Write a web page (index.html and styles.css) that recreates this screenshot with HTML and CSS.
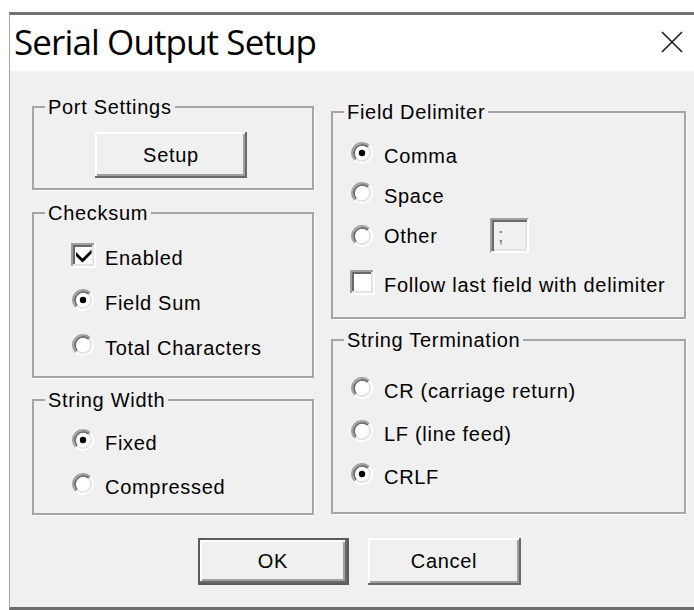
FILE: index.html
```html
<!DOCTYPE html>
<html lang="en">
<head>
<meta charset="utf-8">
<title>Serial Output Setup</title>
<link rel="stylesheet" href="styles.css">
</head>
<body>
<div class="window">
  <header class="titlebar">
    <h1 class="title">Serial Output Setup</h1>
    <span class="close" aria-label="Close">
      <svg viewBox="0 0 22 22" width="22" height="22"><path d="M1 1 L21 21 M21 1 L1 21" stroke="#1c1c1c" stroke-width="1.6" fill="none"/></svg>
    </span>
  </header>

  <main class="content">
    <div class="columns">
      <div class="col col-left">
        <fieldset class="group">
          <legend>Port Settings</legend>
          <div class="group-body body-port">
            <button class="btn btn-setup" type="button">Setup</button>
          </div>
        </fieldset>

        <fieldset class="group group-checksum">
          <legend>Checksum</legend>
          <div class="group-body body-checksum">
            <label class="option">
              <span class="slot">
                <svg class="check" viewBox="0 0 25 25"><rect width="25" height="25" fill="#fff"/><rect width="23" height="23" fill="#a0a0a0"/><rect x="2" y="2" width="21" height="21" fill="#e3e3e3"/><rect x="2" y="2" width="19" height="19" fill="#696969"/><rect x="4" y="4" width="17" height="17" fill="#fff"/><polygon points="5,9 11.5,15.5 20.5,6.5 20.5,10.5 11.5,19.5 5,13" fill="#000"/></svg>
              </span>
              <span>Enabled</span>
            </label>
            <label class="option">
              <span class="slot">
                <svg class="radio" viewBox="0 0 24 24"><circle cx="12" cy="12" r="9" fill="#fff"/><path d="M4.22 19.78A11 11 0 0 1 19.78 4.22" stroke="#a0a0a0" stroke-width="2" fill="none"/><path d="M5.64 18.36A9 9 0 0 1 18.36 5.64" stroke="#696969" stroke-width="2" fill="none"/><path d="M19.78 4.22A11 11 0 0 1 4.22 19.78" stroke="#fff" stroke-width="2" fill="none"/><path d="M18.36 5.64A9 9 0 0 1 5.64 18.36" stroke="#e3e3e3" stroke-width="2" fill="none"/><circle cx="12" cy="12" r="3.5" fill="#000"/></svg>
              </span>
              <span>Field Sum</span>
            </label>
            <label class="option">
              <span class="slot">
                <svg class="radio" viewBox="0 0 24 24"><circle cx="12" cy="12" r="9" fill="#fff"/><path d="M4.22 19.78A11 11 0 0 1 19.78 4.22" stroke="#a0a0a0" stroke-width="2" fill="none"/><path d="M5.64 18.36A9 9 0 0 1 18.36 5.64" stroke="#696969" stroke-width="2" fill="none"/><path d="M19.78 4.22A11 11 0 0 1 4.22 19.78" stroke="#fff" stroke-width="2" fill="none"/><path d="M18.36 5.64A9 9 0 0 1 5.64 18.36" stroke="#e3e3e3" stroke-width="2" fill="none"/></svg>
              </span>
              <span>Total Characters</span>
            </label>
          </div>
        </fieldset>

        <fieldset class="group group-width">
          <legend>String Width</legend>
          <div class="group-body body-width">
            <label class="option">
              <span class="slot">
                <svg class="radio" viewBox="0 0 24 24"><circle cx="12" cy="12" r="9" fill="#fff"/><path d="M4.22 19.78A11 11 0 0 1 19.78 4.22" stroke="#a0a0a0" stroke-width="2" fill="none"/><path d="M5.64 18.36A9 9 0 0 1 18.36 5.64" stroke="#696969" stroke-width="2" fill="none"/><path d="M19.78 4.22A11 11 0 0 1 4.22 19.78" stroke="#fff" stroke-width="2" fill="none"/><path d="M18.36 5.64A9 9 0 0 1 5.64 18.36" stroke="#e3e3e3" stroke-width="2" fill="none"/><circle cx="12" cy="12" r="3.5" fill="#000"/></svg>
              </span>
              <span>Fixed</span>
            </label>
            <label class="option">
              <span class="slot">
                <svg class="radio" viewBox="0 0 24 24"><circle cx="12" cy="12" r="9" fill="#fff"/><path d="M4.22 19.78A11 11 0 0 1 19.78 4.22" stroke="#a0a0a0" stroke-width="2" fill="none"/><path d="M5.64 18.36A9 9 0 0 1 18.36 5.64" stroke="#696969" stroke-width="2" fill="none"/><path d="M19.78 4.22A11 11 0 0 1 4.22 19.78" stroke="#fff" stroke-width="2" fill="none"/><path d="M18.36 5.64A9 9 0 0 1 5.64 18.36" stroke="#e3e3e3" stroke-width="2" fill="none"/></svg>
              </span>
              <span>Compressed</span>
            </label>
          </div>
        </fieldset>
      </div>

      <div class="col col-right">
        <fieldset class="group">
          <legend>Field Delimiter</legend>
          <div class="group-body body-delim">
            <label class="option">
              <span class="slot">
                <svg class="radio" viewBox="0 0 24 24"><circle cx="12" cy="12" r="9" fill="#fff"/><path d="M4.22 19.78A11 11 0 0 1 19.78 4.22" stroke="#a0a0a0" stroke-width="2" fill="none"/><path d="M5.64 18.36A9 9 0 0 1 18.36 5.64" stroke="#696969" stroke-width="2" fill="none"/><path d="M19.78 4.22A11 11 0 0 1 4.22 19.78" stroke="#fff" stroke-width="2" fill="none"/><path d="M18.36 5.64A9 9 0 0 1 5.64 18.36" stroke="#e3e3e3" stroke-width="2" fill="none"/><circle cx="12" cy="12" r="3.5" fill="#000"/></svg>
              </span>
              <span>Comma</span>
            </label>
            <label class="option opt-space">
              <span class="slot">
                <svg class="radio" viewBox="0 0 24 24"><circle cx="12" cy="12" r="9" fill="#fff"/><path d="M4.22 19.78A11 11 0 0 1 19.78 4.22" stroke="#a0a0a0" stroke-width="2" fill="none"/><path d="M5.64 18.36A9 9 0 0 1 18.36 5.64" stroke="#696969" stroke-width="2" fill="none"/><path d="M19.78 4.22A11 11 0 0 1 4.22 19.78" stroke="#fff" stroke-width="2" fill="none"/><path d="M18.36 5.64A9 9 0 0 1 5.64 18.36" stroke="#e3e3e3" stroke-width="2" fill="none"/></svg>
              </span>
              <span>Space</span>
            </label>
            <div class="option opt-other">
              <span class="slot">
                <svg class="radio" viewBox="0 0 24 24"><circle cx="12" cy="12" r="9" fill="#fff"/><path d="M4.22 19.78A11 11 0 0 1 19.78 4.22" stroke="#a0a0a0" stroke-width="2" fill="none"/><path d="M5.64 18.36A9 9 0 0 1 18.36 5.64" stroke="#696969" stroke-width="2" fill="none"/><path d="M19.78 4.22A11 11 0 0 1 4.22 19.78" stroke="#fff" stroke-width="2" fill="none"/><path d="M18.36 5.64A9 9 0 0 1 5.64 18.36" stroke="#e3e3e3" stroke-width="2" fill="none"/></svg>
              </span>
              <span class="other-label">Other</span>
              <input class="field" type="text" value=";" disabled>
            </div>
            <label class="option opt-follow">
              <span class="slot">
                <svg class="check" viewBox="0 0 25 25"><rect width="25" height="25" fill="#fff"/><rect width="23" height="23" fill="#a0a0a0"/><rect x="2" y="2" width="21" height="21" fill="#e3e3e3"/><rect x="2" y="2" width="19" height="19" fill="#696969"/><rect x="4" y="4" width="17" height="17" fill="#fff"/></svg>
              </span>
              <span>Follow last field with delimiter</span>
            </label>
          </div>
        </fieldset>

        <fieldset class="group group-term">
          <legend>String Termination</legend>
          <div class="group-body body-term">
            <label class="option">
              <span class="slot">
                <svg class="radio" viewBox="0 0 24 24"><circle cx="12" cy="12" r="9" fill="#fff"/><path d="M4.22 19.78A11 11 0 0 1 19.78 4.22" stroke="#a0a0a0" stroke-width="2" fill="none"/><path d="M5.64 18.36A9 9 0 0 1 18.36 5.64" stroke="#696969" stroke-width="2" fill="none"/><path d="M19.78 4.22A11 11 0 0 1 4.22 19.78" stroke="#fff" stroke-width="2" fill="none"/><path d="M18.36 5.64A9 9 0 0 1 5.64 18.36" stroke="#e3e3e3" stroke-width="2" fill="none"/></svg>
              </span>
              <span>CR (carriage return)</span>
            </label>
            <label class="option">
              <span class="slot">
                <svg class="radio" viewBox="0 0 24 24"><circle cx="12" cy="12" r="9" fill="#fff"/><path d="M4.22 19.78A11 11 0 0 1 19.78 4.22" stroke="#a0a0a0" stroke-width="2" fill="none"/><path d="M5.64 18.36A9 9 0 0 1 18.36 5.64" stroke="#696969" stroke-width="2" fill="none"/><path d="M19.78 4.22A11 11 0 0 1 4.22 19.78" stroke="#fff" stroke-width="2" fill="none"/><path d="M18.36 5.64A9 9 0 0 1 5.64 18.36" stroke="#e3e3e3" stroke-width="2" fill="none"/></svg>
              </span>
              <span>LF (line feed)</span>
            </label>
            <label class="option">
              <span class="slot">
                <svg class="radio" viewBox="0 0 24 24"><circle cx="12" cy="12" r="9" fill="#fff"/><path d="M4.22 19.78A11 11 0 0 1 19.78 4.22" stroke="#a0a0a0" stroke-width="2" fill="none"/><path d="M5.64 18.36A9 9 0 0 1 18.36 5.64" stroke="#696969" stroke-width="2" fill="none"/><path d="M19.78 4.22A11 11 0 0 1 4.22 19.78" stroke="#fff" stroke-width="2" fill="none"/><path d="M18.36 5.64A9 9 0 0 1 5.64 18.36" stroke="#e3e3e3" stroke-width="2" fill="none"/><circle cx="12" cy="12" r="3.5" fill="#000"/></svg>
              </span>
              <span>CRLF</span>
            </label>
          </div>
        </fieldset>
      </div>
    </div>

    <div class="actions">
      <button class="btn btn-ok btn-default" type="button">OK</button>
      <button class="btn btn-cancel" type="button">Cancel</button>
    </div>
  </main>
</div>
</body>
</html>
```

FILE: styles.css
```css
* { box-sizing: border-box; }

html, body { margin: 0; }

body {
  height: 610px;
  overflow: hidden;
  padding: 12px 0 0 9px;
  background: #fff;
  color: #000;
  font-family: "Liberation Sans", Arial, sans-serif;
  font-size: 20px;
  letter-spacing: 0.7px;
}

/* dialog frame: dark top/bottom edges, thin light left edge */
.window {
  height: 598px;
  display: flex;
  flex-direction: column;
  background: #f0f0f0;
  border-top: 3px solid #747474;
  border-bottom: 3px solid #6c6c6c;
  border-left: 1px solid #a6a6a6;
}

.titlebar {
  flex: none;
  height: 56px;
  display: flex;
  align-items: flex-start;
  justify-content: space-between;
  padding: 7px 11px 0 4px;
  background: #fff;
}

.title {
  margin: 0;
  font-family: "Open Sans", "Noto Sans", sans-serif;
  font-weight: 400;
  font-size: 35px;
  line-height: 40px;
  letter-spacing: -0.9px;
}

.close {
  height: 40px;
  display: flex;
  align-items: center;
}

.content {
  padding-left: 22px;
}

.columns {
  display: flex;
  align-items: flex-start;
  gap: 17px;
}

.col {
  display: flex;
  flex-direction: column;
}

.col-left { width: 282px; padding-top: 26px; }
.col-right { width: 355px; padding-top: 31px; }

/* etched group box */
.group {
  margin: 0;
  padding: 0;
  min-width: 0;
  border: 2px solid #a5a5a5;
  box-shadow: 1px 1px 0 #fff;
}

.group legend {
  margin-left: 11px;
  padding: 0 3px;
  line-height: 20px;
}

.group-checksum { margin-top: 13px; }
.group-width { margin-top: 12px; }
.group-term { margin-top: 11px; }

.group-body {
  display: flex;
  flex-direction: column;
}

.body-port { padding: 15px 0 10px 61px; }
.body-checksum { padding: 23px 0 16px 36px; gap: 21px; }
.body-width { padding: 21px 0 14px 36px; gap: 20px; }
.body-delim { padding: 22px 0 20px 16px; }
.body-term { padding: 29px 0 23px 16px; gap: 19px; }

.option {
  display: flex;
  align-items: flex-start;
  gap: 9px;
  height: 24px;
  line-height: 24px;
  white-space: nowrap;
}

.slot {
  flex: none;
  width: 26px;
  height: 18px;
  display: flex;
  align-items: center;
  justify-content: center;
}

.radio { flex: none; width: 22px; height: 22px; }
.check { flex: none; width: 25px; height: 25px; }

.opt-space { margin-top: 16px; }
.opt-other { margin-top: 10px; height: 35px; align-items: center; }
.opt-follow { margin-top: 20px; }

.other-label { width: 97px; }

/* disabled, sunken edit box */
.field {
  width: 39px;
  height: 35px;
  margin: 0;
  padding: 0 0 0 6px;
  font: inherit;
  color: #7a7a8c;
  background: #f0f0f0;
  border: 2px solid;
  border-color: #a0a0a0 #fff #fff #a0a0a0;
  box-shadow: inset 2px 2px 0 #696969, inset -2px -2px 0 #e3e3e3;
  outline: none;
}

/* raised push buttons */
.btn {
  margin: 0;
  padding: 0;
  font: inherit;
  letter-spacing: inherit;
  color: #000;
  background: #f0f0f0;
  border: 0;
  box-shadow: inset -2px -2px 0 #696969, inset 2px 2px 0 #fff, inset -4px -4px 0 #a0a0a0;
}

.btn-setup { width: 152px; height: 46px; }

.btn-default { border: 2px solid #5b5b5b; }

.actions {
  width: 654px;
  display: flex;
  justify-content: center;
  gap: 19px;
  margin-top: 23px;
}

.btn-ok { width: 151px; height: 47px; }
.btn-cancel { width: 153px; height: 47px; }
```
